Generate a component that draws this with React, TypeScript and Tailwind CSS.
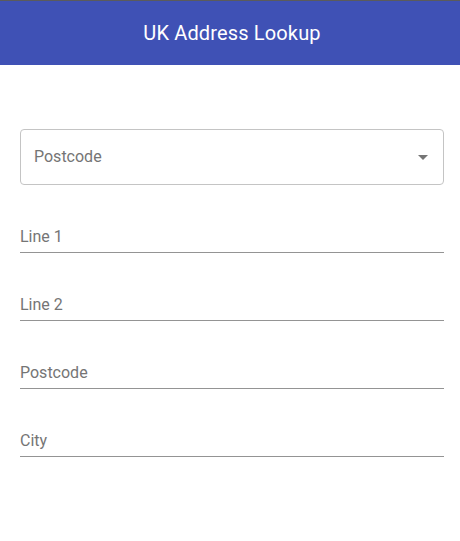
import React from "react";

const FIELDS = ["Line 1", "Line 2", "Postcode", "City"];

function ArrowDrop() {
  return (
    <svg className="w-6 h-6 shrink-0" viewBox="0 0 24 24" fill="#757575">
      <path d="M7 10l5 5 5-5z" />
    </svg>
  );
}

export default function App() {
  return (
    <div className="min-h-screen bg-white font-['Roboto',_'Liberation_Sans',_sans-serif]">
      {/* App bar */}
      <header className="h-[65px] border-t border-[#5b5b5b] bg-[#3f51b5] flex items-center justify-center">
        <h1 className="text-white text-[20px] leading-[24px] font-normal tracking-[0.15px] pl-1">
          UK Address Lookup
        </h1>
      </header>

      <main className="pl-5 pr-4 pt-[64px]">
        {/* Postcode select */}
        <div className="h-14 border border-[#c4c4c4] rounded flex items-center pl-[13px] pr-[8px]">
          <span className="flex-1 text-[16px] leading-[19px] text-[#757575] -mt-0.5">Postcode</span>
          <ArrowDrop />
        </div>

        {/* Text fields */}
        {FIELDS.map((label) => (
          <div key={label} className="pt-[42px] pb-[6px] border-b border-[#949494]">
            <span className="block text-[16px] leading-[19px] text-[#757575]">{label}</span>
          </div>
        ))}
      </main>
    </div>
  );
}
